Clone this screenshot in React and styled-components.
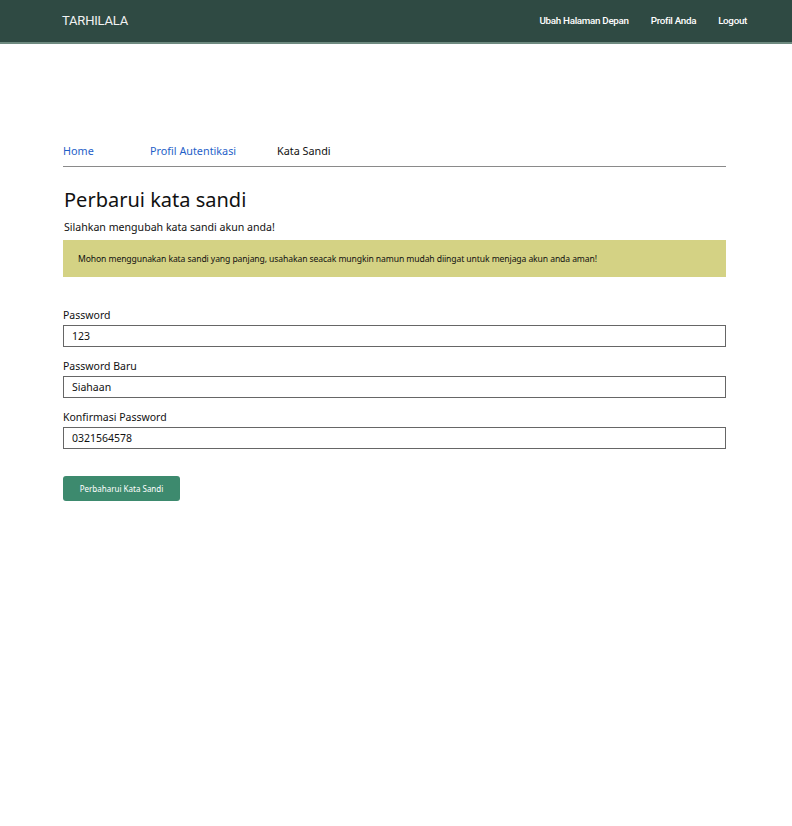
import React from "react";
import styled, { createGlobalStyle } from "styled-components";

const GlobalStyle = createGlobalStyle`
  body {
    margin: 0;
    font-family: "Noto Sans", "DejaVu Sans", sans-serif;
    background: #fff;
    color: #111;
  }
`;

const NavBar = styled.nav`
  height: 42px;
  background: #2f4a43;
  border-bottom: 2px solid #6e8a80;
  display: flex;
  align-items: center;
  justify-content: space-between;
  padding: 0 45px 0 62px;
`;

const Brand = styled.div`
  color: #f2f2f2;
  font-family: Roboto, "Liberation Sans", sans-serif;
  font-size: 13px;
  letter-spacing: -0.2px;
  margin-top: -2px;
`;

const NavLinks = styled.div`
  display: flex;
  gap: 22px;
  margin-top: -2px;
`;

const NavLink = styled.a`
  color: #fff;
  font-family: Roboto, "Liberation Sans", sans-serif;
  font-size: 9.8px;
  font-weight: 500;
  letter-spacing: -0.3px;
  text-decoration: none;
`;

const Main = styled.main`
  padding: 99px 66px 0 63px;
`;

const Crumbs = styled.div`
  display: flex;
  border-bottom: 1px solid #8a8a8a;
  padding-bottom: 8px;
`;

const Crumb = styled.a`
  font-size: 10.8px;
  color: ${(p) => (p.$active ? "#111" : "#1f5fc8")};
  text-decoration: none;
  width: ${(p) => p.$w || "auto"};
`;

const Title = styled.h1`
  font-size: 20px;
  font-weight: 400;
  margin: 19px 0 0 1px;
`;

const Subtitle = styled.p`
  font-size: 10.6px;
  margin: 7px 0 0 1px;
`;

const Alert = styled.div`
  background: #d4d284;
  margin-top: 6px;
  height: 37px;
  display: flex;
  align-items: center;
  padding-left: 15px;
  font-size: 8.6px;
  letter-spacing: -0.1px;
`;

const Form = styled.form`
  margin-top: 31px;
  display: flex;
  flex-direction: column;
  gap: 12px;
`;

const Field = styled.div`
  display: flex;
  flex-direction: column;
  gap: 3px;
`;

const Label = styled.label`
  font-size: 10.5px;
`;

const Input = styled.input`
  box-sizing: border-box;
  height: 22px;
  border: 1px solid #666;
  padding: 0 8px;
  font-family: "Noto Sans", "DejaVu Sans", sans-serif;
  font-size: 10.5px;
  color: #111;
  outline: none;
`;

const Button = styled.button`
  margin-top: 15px;
  align-self: flex-start;
  width: 117px;
  height: 25px;
  border: none;
  border-radius: 3px;
  background: #3d8a6e;
  color: #fff;
  font-family: "Noto Sans", "DejaVu Sans", sans-serif;
  font-size: 8px;
`;

export default function App() {
  return (
    <>
      <GlobalStyle />
      <NavBar>
        <Brand>TARHILALA</Brand>
        <NavLinks>
          <NavLink href="#">Ubah Halaman Depan</NavLink>
          <NavLink href="#">Profil Anda</NavLink>
          <NavLink href="#">Logout</NavLink>
        </NavLinks>
      </NavBar>
      <Main>
        <Crumbs>
          <Crumb href="#" $w="87px">Home</Crumb>
          <Crumb href="#" $w="127px">Profil Autentikasi</Crumb>
          <Crumb $active>Kata Sandi</Crumb>
        </Crumbs>
        <Title>Perbarui kata sandi</Title>
        <Subtitle>Silahkan mengubah kata sandi akun anda!</Subtitle>
        <Alert>
          Mohon menggunakan kata sandi yang panjang, usahakan seacak mungkin namun mudah diingat untuk menjaga akun anda aman!
        </Alert>
        <Form onSubmit={(e) => e.preventDefault()}>
          <Field>
            <Label>Password</Label>
            <Input defaultValue="123" />
          </Field>
          <Field>
            <Label>Password Baru</Label>
            <Input defaultValue="Siahaan" />
          </Field>
          <Field>
            <Label>Konfirmasi Password</Label>
            <Input defaultValue="0321564578" />
          </Field>
          <Button type="submit">Perbaharui Kata Sandi</Button>
        </Form>
      </Main>
    </>
  );
}
